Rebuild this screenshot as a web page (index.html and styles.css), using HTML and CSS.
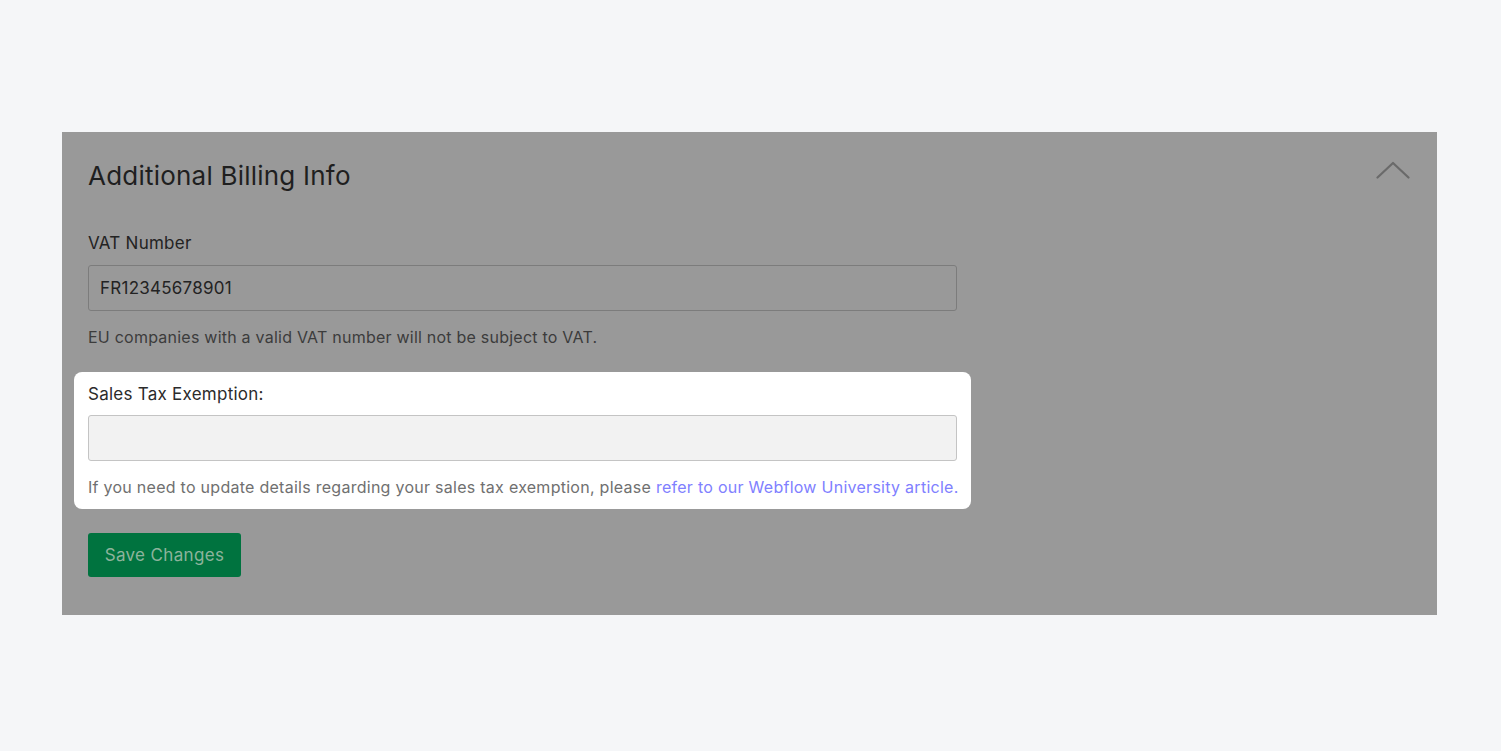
FILE: index.html
```html
<!DOCTYPE html>
<html>
<head>
<meta charset="utf-8">
<link rel="stylesheet" href="styles.css">
</head>
<body>
<section class="panel">
  <div class="panel-head">
    <h2 class="title">Additional Billing Info</h2>
    <svg class="chevron" width="34" height="18" viewBox="0 0 34 18"><path d="M1.5 16.5 L17 2 L32.5 16.5" fill="none" stroke="#6a6a6a" stroke-width="2.2" stroke-linecap="round" stroke-linejoin="round"/></svg>
  </div>
  <div class="field">
    <label class="label">VAT Number</label>
    <div class="input">FR12345678901</div>
    <p class="help">EU companies with a valid VAT number will not be subject to VAT.</p>
  </div>
  <div class="highlight">
    <label class="label label-hl">Sales Tax Exemption:</label>
    <div class="input input-hl"></div>
    <p class="help help-hl">If you need to update details regarding your sales tax exemption, please <a class="link" href="#">refer to our Webflow University article.</a></p>
  </div>
  <button class="save">Save Changes</button>
</section>
</body>
</html>
```
FILE: styles.css
```css
html, body {
  margin: 0;
  padding: 0;
}
body {
  background: #f5f6f8;
  font-family: Inter, "Noto Sans", sans-serif;
  padding: 132px 64px 0 62px;
  height: 751px;
  box-sizing: border-box;
}
.panel {
  background: #999999;
  height: 483px;
  box-sizing: border-box;
  padding: 28px 27px 0 26px;
}
.panel-head {
  display: flex;
  justify-content: space-between;
  align-items: flex-start;
}
.title {
  margin: 0;
  font-size: 26px;
  line-height: 32px;
  font-weight: 400;
  color: #1f1f1f;
  letter-spacing: 0.22px;
}
.chevron {
  margin-top: 1px;
}
.field {
  margin-top: 39px;
  width: 869px;
}
.label {
  display: block;
  font-size: 17px;
  line-height: 24px;
  color: #232323;
  letter-spacing: 0.25px;
}
.input {
  margin-top: 10px;
  height: 46px;
  box-sizing: border-box;
  border: 1px solid #7c7c7c;
  border-radius: 3px;
  padding: 0 11px;
  font-size: 17px;
  line-height: 44px;
  color: #232323;
  letter-spacing: 0.25px;
}
.help {
  margin: 15px 0 0;
  font-size: 16px;
  line-height: 22px;
  color: #3c3c3c;
  letter-spacing: 0.23px;
  white-space: nowrap;
}
.highlight {
  margin: 24px 0 0 -14px;
  width: 897px;
  box-sizing: border-box;
  background: #ffffff;
  border-radius: 8px;
  padding: 10px 14px 11px;
}
.label-hl {
  color: #2b2b2b;
}
.input-hl {
  margin-top: 9px;
  background: #f2f2f2;
  border-color: #c4c4c4;
}
.help-hl {
  color: #707070;
  letter-spacing: 0.27px;
}
.link {
  color: #8080ff;
  text-decoration: none;
}
.save {
  display: block;
  margin-top: 24px;
  width: 153px;
  height: 44px;
  border: none;
  border-radius: 3px;
  background: #00733f;
  color: #8db39c;
  font-family: Inter, "Noto Sans", sans-serif;
  font-size: 17px;
  letter-spacing: 0.35px;
  padding: 0;
}
```
